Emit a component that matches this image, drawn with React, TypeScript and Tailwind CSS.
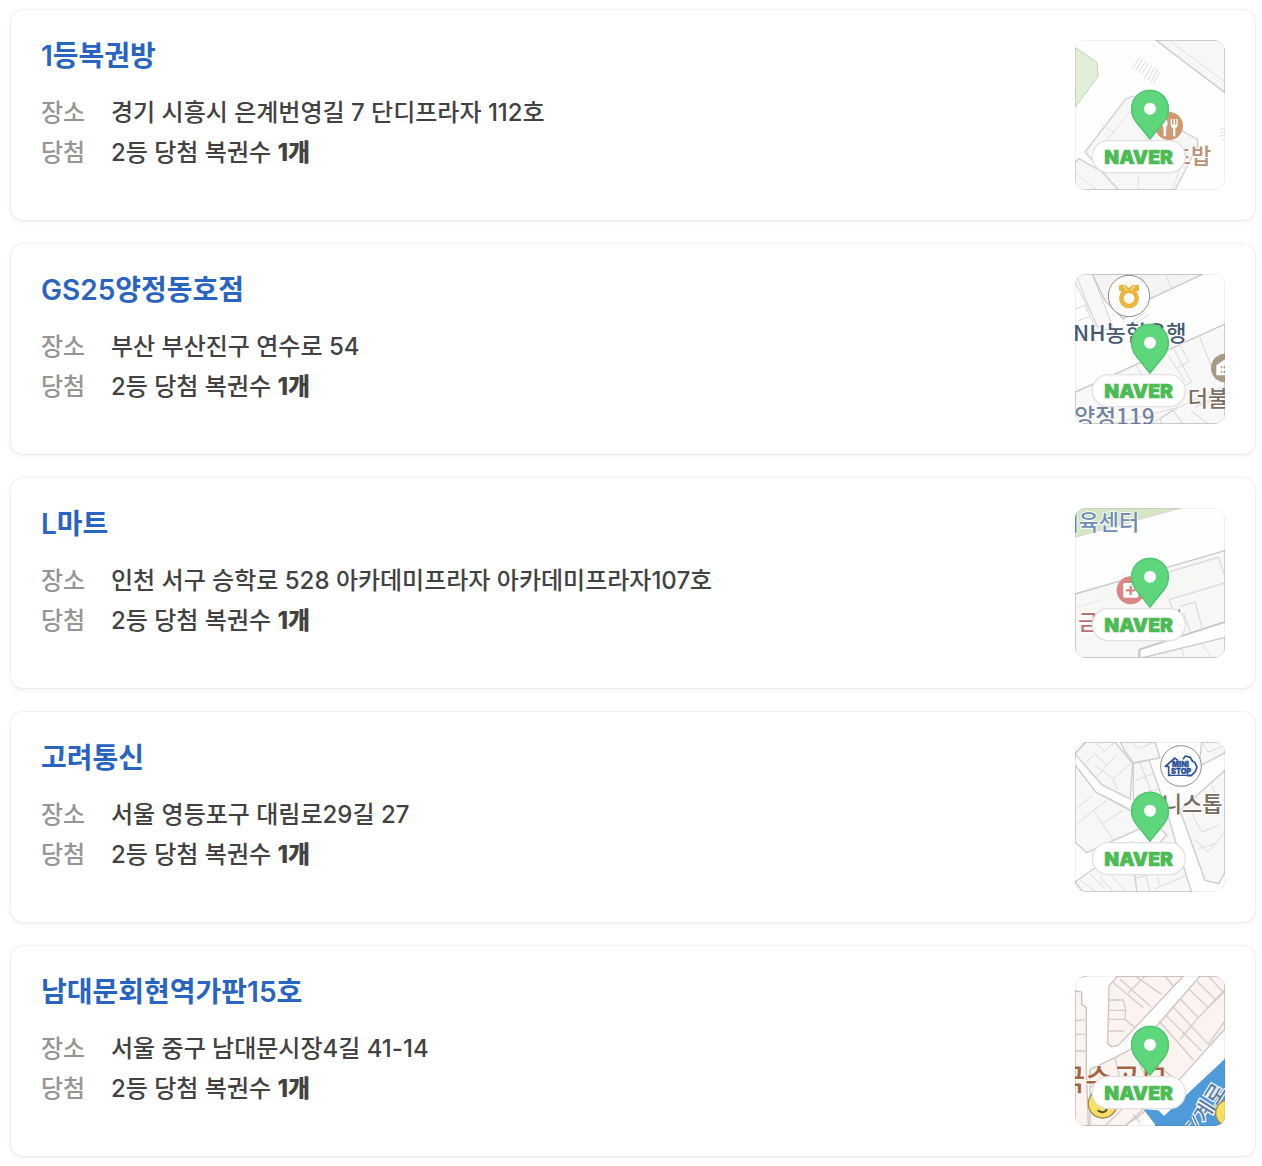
import type { ReactNode } from "react";

type Shop = {
  name: string;
  address: string;
  count: string;
  map: ReactNode;
};

/* Every map is drawn on a 450-unit square that starts at (30, 30). */

const SiheungMap = (
  <>
    <rect x="30" y="30" width="450" height="450" fill="#fefefe" />
    <path d="M30 52L95 96L100 138L30 232Z" fill="#e0efd5" stroke="#c9ccc4" strokeWidth="3" />
    <path d="M272 30L480 188V30Z" fill="#f7f7f7" stroke="#cdcaca" strokeWidth="4" />
    <path d="M310 30L480 156" fill="none" stroke="#e3e1e1" strokeWidth="3" />
    <path d="M60 366L182 207L206 198L290 270L398 328V348L330 480H160L60 366Z" fill="#f7f7f7" stroke="#d3d0d0" strokeWidth="4" />
    <path d="M92 372L210 226M108 282L150 310M290 270L235 340M345 415L322 480" fill="none" stroke="#e2e0e0" strokeWidth="3" />
    <path d="M30 397L42 386L110 425L160 480H30Z" fill="#f7f7f7" stroke="#d3d0d0" strokeWidth="4" />
    <path d="M30 430L98 480M220 432V480" fill="none" stroke="#e4e2e2" strokeWidth="3" />
    <path d="M224 82L203 115M233 88L212 121M242 94L221 127M251 100L230 133M260 106L239 145M269 112L248 151M278 118L257 157M285 126L264 162" stroke="#dddada" strokeWidth="3" />
    <path d="M462 300L480 294M462 310L480 304M462 320L480 314M470 330L480 326" stroke="#e6e4e4" strokeWidth="3" />
    <circle cx="312" cy="288" r="42" fill="#cf9a72" />
    <path d="M300 268a9 12 0 0 1 4 22l-1 29h-7l-1-29a9 12 0 0 1 5-22ZM317 267v18q0 8 7 9v25h7v-25q7-1 7-9v-18h-4v17h-4v-17h-5v17h-4v-17Z" fill="#fff" />
    <text x="317" y="403" fontSize="66" fontWeight="500" fill="#bd8f75" stroke="#fff" strokeWidth="5" paintOrder="stroke">초밥</text>
  </>
);

const BusanMap = (
  <>
    <rect x="30" y="30" width="450" height="450" fill="#fefefe" />
    <path d="M30 30H82L150 205L100 190L30 55Z" fill="#f7f7f6" stroke="#d5d2d2" strokeWidth="3" />
    <path d="M82 30H415L258 103L175 165L120 110Z" fill="#f5f4f2" stroke="#c9c6c6" strokeWidth="4" />
    <path d="M36 40L98 195M30 136L60 123L90 190M40 170L75 156M255 100L228 34M320 73L300 30" fill="none" stroke="#d9d6d6" strokeWidth="3" />
    <path d="M30 385L480 180V480H30Z" fill="#f8f8f8" stroke="#cbc8c8" strokeWidth="4" />
    <path d="M138 480L340 430L480 365M325 252L380 355L310 385M345 245L372 293L340 310M404 218L440 310M310 275L360 350M100 355L122 395M212 300L238 345" fill="none" stroke="#dad7d7" strokeWidth="3" />
    <path d="M260 480L322 438L356 480M288 480V462L338 432M378 440L430 480M390 430L480 390" fill="none" stroke="#d2cfcf" strokeWidth="3" />
    <path d="M205 170L240 145M215 176L252 151" stroke="#d9d6d6" strokeWidth="3" />
    <circle cx="192" cy="96" r="62" fill="#fff" stroke="#8d8d8d" strokeWidth="3" />
    <path d="M162 64L180 62L192 72L204 62L222 64V80L210 84L192 96L174 84L162 80Z" fill="#edb63b" />
    <circle cx="192" cy="103" r="23" fill="#fff" stroke="#edb63b" strokeWidth="14" />
    <path d="M176 66L186 80M208 66L198 80" fill="none" stroke="#fff" strokeWidth="3" />
    <text x="24" y="232" fontSize="66" fontWeight="500" fill="#455a70" stroke="#fff" strokeWidth="5" paintOrder="stroke">NH농협은행</text>
    <circle cx="481" cy="312" r="43" fill="#a99a88" />
    <path d="M454 334V304L480 286V334Z" fill="#fff" />
    <path d="M470 306v7M470 320v7M478 306v7M478 320v7" stroke="#a99a88" strokeWidth="4" />
    <text x="368" y="427" fontSize="66" fontWeight="500" fill="#7d6f64" stroke="#fff" strokeWidth="5" paintOrder="stroke">더불</text>
    <text x="28" y="484" fontSize="68" fontWeight="500" fill="#7583a0" stroke="#fff" strokeWidth="5" paintOrder="stroke">양정119</text>
  </>
);

const IncheonMap = (
  <>
    <rect x="30" y="30" width="450" height="450" fill="#fefefe" />
    <path d="M30 30H348L30 118Z" fill="#d5e6c5" stroke="#d6d6cf" strokeWidth="3" />
    <path d="M30 288L480 158V372L225 455V480H30Z" fill="#f7f7f6" stroke="#cac8c8" strokeWidth="4" />
    <path d="M300 225L460 178L480 235M312 305L480 255M312 305L325 340M345 325L390 312L412 392M355 345L375 400" fill="none" stroke="#dddada" strokeWidth="4" />
    <path d="M30 330L110 305" stroke="#e8e6e6" strokeWidth="3" />
    <path d="M222 480V455L236 450L480 372" fill="none" stroke="#c7c5c5" strokeWidth="4" />
    <path d="M230 480L480 418V480Z" fill="#f7f7f7" stroke="#cbc9c9" strokeWidth="4" />
    <path d="M350 450L358 480M410 437L440 480" stroke="#dddada" strokeWidth="3" />
    <text x="-20" y="95" fontSize="66" fontWeight="500" fill="#6f8cb1" stroke="#fff" strokeWidth="5" paintOrder="stroke">체육센터</text>
    <circle cx="197" cy="277" r="42" fill="#d98686" />
    <rect x="175" y="255" width="45" height="44" rx="4" fill="#fff" />
    <path d="M197 263v28M183 277h28" stroke="#d98686" strokeWidth="7" />
    <text x="40" y="395" fontSize="66" fontWeight="500" fill="#bd6f70" stroke="#fff" strokeWidth="5" paintOrder="stroke">금</text>
    <path d="M343 334v12" stroke="#bd6f70" strokeWidth="5" />
  </>
);

const DaerimMap = (
  <>
    <rect x="30" y="30" width="450" height="450" fill="#fefefe" />
    <g fill="#f7f7f7" stroke="#cfcccc" strokeWidth="4">
      <path d="M62 30H150L203 95L196 195L190 210L95 178L30 105V65Z" />
      <path d="M165 30H270L285 78L205 92L178 55Z" />
      <path d="M205 95L252 84L305 235L335 340L380 480H205L195 425L305 310L205 200Z" />
      <path d="M30 98L90 175L205 240L225 290L65 362L30 330Z" />
      <path d="M30 450L200 330L215 480H55Z" />
      <path d="M480 115L345 235L420 445L462 455L480 420Z" />
      <path d="M410 30H480V62L402 104Z" />
    </g>
    <path d="M30 80L100 168L215 222" fill="none" stroke="#fefefe" strokeWidth="26" />
    <path d="M62 30L30 65L110 158L200 203M30 98L92 180L205 240" fill="none" stroke="#cfcccc" strokeWidth="4" />
    <g fill="none" stroke="#dddada" strokeWidth="3">
      <path d="M90 30L118 58L150 30M60 95L90 65L125 100L155 68M90 100L145 140L200 92M145 140L155 172M125 100L95 135" />
      <path d="M200 30L220 50L270 30M210 145L265 125M220 190L285 170M225 92L258 180" />
      <path d="M85 235L145 325M30 280L85 235M85 235L125 205M30 235L80 190M110 275L175 235" />
      <path d="M45 445L95 480M75 425L120 470M105 435L145 480M135 425L180 475M235 400L255 480M255 350L285 460M210 440L330 400M270 470L365 430" />
      <path d="M375 235L410 300L460 280M385 320L430 360L480 300M400 350L450 335M410 30L430 60L480 40M440 160L460 205" />
    </g>
    <circle cx="348" cy="102" r="61" fill="#fff" stroke="#8d8d8d" strokeWidth="3" />
    <path d="M318 130H311V103H301L330 78L339 86M354 82L361 72L376 76L382 87L390 92L396 106L390 120L379 131H366" fill="none" stroke="#284f98" strokeWidth="5" strokeLinejoin="round" />
    <path d="M311 130H379" stroke="#284f98" strokeWidth="4" />
    <g className="font-[Inter,sans-serif]" fontSize="22" fontWeight="900" fill="#284f98" stroke="#284f98" strokeWidth="1">
      <text x="321" y="104">MINI</text>
      <text x="318" y="125">STOP</text>
    </g>
    <text x="290" y="239" fontSize="66" fontWeight="500" fill="#776b61" stroke="#fff" strokeWidth="5" paintOrder="stroke">니스톱</text>
  </>
);

const NamdaemunMap = (
  <>
    <rect x="30" y="30" width="450" height="450" fill="#fefefe" />
    <g fill="#fbf3ef" stroke="#cbc4c1" strokeWidth="4">
      <path d="M30 75L50 78V115L64 124V310L70 480H30Z" />
      <path d="M158 30H355L205 190L160 238L140 242L128 232L132 60Z" />
      <path d="M405 30H480V188L330 355L295 345L215 250Z" />
      <path d="M75 310L150 275L205 245L340 345L270 415L180 480H75Z" />
    </g>
    <g fill="none" stroke="#d3ccc9" strokeWidth="4">
      <path d="M30 165L60 160M30 205H62M30 255H64M35 35L64 30" />
      <path d="M132 102H175L182 130M132 133H182M130 160H180M130 195H178M145 50L235 125M165 40L258 122M190 80L240 30M210 30L290 85M300 30L325 60M182 130L180 160L210 185" />
      <path d="M372 70L430 125L480 75M430 30L480 85M395 45L450 100M345 98L400 155L480 70M322 120L430 235M300 145L410 255M282 165L385 282M345 98L230 235M400 155L345 220M430 235L480 165M265 185L300 225M245 210L280 245" />
      <path d="M150 275L165 340M205 245L240 330M75 365L120 330M120 480L180 420M180 480L240 425M205 445L225 470" />
    </g>
    <path d="M480 278L350 400L297 450L280 433L235 430L270 475V480H480Z" fill="#4f9ad8" />
    <text x="-22" y="373" fontSize="90" fontWeight="500" fill="#a86442" stroke="#fff" strokeWidth="4" paintOrder="stroke">국수공모</text>
    <circle cx="113" cy="413" r="43" fill="#f8df62" stroke="#9a8d58" strokeWidth="4" />
    <path d="M98 433Q113 443 122 435Q128 428 122 420" fill="none" stroke="#57503c" strokeWidth="6" />
    <text x="422" y="474" fontSize="66" fontWeight="500" fill="#5d7fa5" stroke="#fff" strokeWidth="7" paintOrder="stroke" transform="rotate(-58 422 474)">계로</text>
    <path d="M364 480L376 466M384 450L398 480" stroke="#fff" strokeWidth="12" />
    <path d="M364 480L376 466M384 450L398 480" stroke="#5d7fa5" strokeWidth="5" />
    <circle cx="492" cy="441" r="40" fill="#f8df62" stroke="#9a8d58" strokeWidth="4" />
  </>
);

const shops: Shop[] = [
  { name: "1등복권방", address: "경기 시흥시 은계번영길 7 단디프라자 112호", count: "1개", map: SiheungMap },
  { name: "GS25양정동호점", address: "부산 부산진구 연수로 54", count: "1개", map: BusanMap },
  { name: "L마트", address: "인천 서구 승학로 528 아카데미프라자 아카데미프라자107호", count: "1개", map: IncheonMap },
  { name: "고려통신", address: "서울 영등포구 대림로29길 27", count: "1개", map: DaerimMap },
  { name: "남대문회현역가판15호", address: "서울 중구 남대문시장4길 41-14", count: "1개", map: NamdaemunMap },
];

function MapThumb({ name, children }: { name: string; children: ReactNode }) {
  return (
    <a href="#map" aria-label={`${name} 지도`} className="block shrink-0 overflow-hidden rounded-[10px]">
      <svg viewBox="30 30 450 450" className="block size-[150px]">
        <g className="font-['Noto_Sans_CJK_KR',sans-serif]">{children}</g>
        <rect x="31" y="31" width="448" height="448" rx="30" fill="none" stroke="#000" strokeOpacity="0.07" strokeWidth="3" />
        <rect x="82" y="332" width="279" height="96" rx="48" fill="#fff" stroke="#e2e0e2" strokeWidth="4" />
        <path d="M255 330L212 277Q198 259 198 236A57 57 0 0 1 312 236Q312 259 298 277Z" fill="#5dd67c" />
        <path d="M255 327L214 276Q200 259 200 236A55 55 0 0 1 310 236Q310 259 296 276Z" fill="none" stroke="#4fc570" strokeWidth="4" />
        <circle cx="255" cy="236" r="18" fill="#fff" />
        <text x="221" y="402" textAnchor="middle" fontSize="58" fontWeight="900" fill="#4cbb54" stroke="#4cbb54" strokeWidth="2">NAVER</text>
      </svg>
    </a>
  );
}

function ShopCard({ shop }: { shop: Shop }) {
  return (
    <li className="flex items-start justify-between gap-8 rounded-xl bg-white p-[30px] shadow-[0_0_2px_rgba(0,0,0,0.14),0_2px_6px_rgba(0,0,0,0.06)]">
      <div className="min-w-0">
        <h2 className="text-[28px] leading-8 font-semibold text-[#2965c0]">
          <a href="#shop">{shop.name}</a>
        </h2>
        <dl className="mt-[21px] grid grid-cols-[70px_1fr] text-2xl leading-10 font-medium text-[#424242]">
          <dt className="text-[#959595]">장소</dt>
          <dd>{shop.address}</dd>
          <dt className="text-[#959595]">당첨</dt>
          <dd>
            2등 당첨 복권수 <strong className="font-extrabold">{shop.count}</strong>
          </dd>
        </dl>
      </div>
      <MapThumb name={shop.name}>{shop.map}</MapThumb>
    </li>
  );
}

export default function App() {
  return (
    <main className="bg-white pt-[10px] pr-[7px] pb-[10px] pl-[11px] font-[Inter,'Noto_Sans_CJK_KR',sans-serif]">
      <ul className="flex flex-col gap-6">
        {shops.map((shop) => (
          <ShopCard key={shop.name} shop={shop} />
        ))}
      </ul>
    </main>
  );
}
